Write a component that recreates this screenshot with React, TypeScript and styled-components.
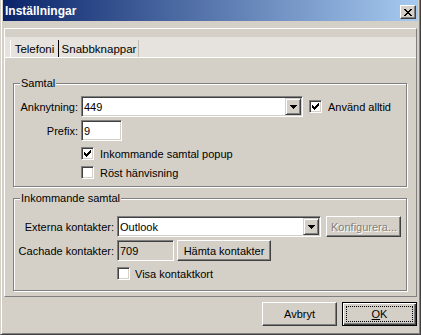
import React from 'react';
import styled, { createGlobalStyle } from 'styled-components';

const GlobalStyle = createGlobalStyle`
  html, body {
    margin: 0;
    padding: 0;
    background: #d4d0c8;
  }
  body {
    font-family: "Liberation Sans", Arial, sans-serif;
    font-size: 11px;
    color: #000;
  }
`;

const Window = styled.div`
  box-sizing: border-box;
  width: 421px;
  height: 335px;
  display: flex;
  flex-direction: column;
  background: #d4d0c8;
  border: 1px solid;
  border-top: none;
  border-color: #d4d0c8 #404040 #404040 #d4d0c8;
  box-shadow: inset 1px 0 #fff, inset -1px -1px #808080;
  padding: 0 2px 2px 2px;
`;

const TitleBar = styled.div`
  flex: none;
  height: 21px;
  display: flex;
  align-items: center;
  justify-content: space-between;
  padding: 0 2px;
  background: linear-gradient(to right, #0a246a, #a6caf0);
  color: #fff;
  font-weight: bold;
  font-size: 12px;
`;

const CloseButton = styled.div`
  box-sizing: border-box;
  width: 16px;
  height: 14px;
  margin-top: 3px;
  display: flex;
  align-items: center;
  justify-content: center;
  background: #d4d0c8;
  border: 1px solid;
  border-color: #fff #404040 #404040 #fff;
  box-shadow: inset -1px -1px #808080;
`;

const Panel = styled.div`
  box-sizing: border-box;
  flex: none;
  height: 269px;
  margin: 7px 1px 0;
  display: flex;
  flex-direction: column;
  border: 1px solid;
  border-color: #fff #808080 #808080 #fff;
`;

const TabBand = styled.div`
  flex: none;
  height: 8px;
`;

const TabStrip = styled.div`
  flex: none;
  height: 20px;
  display: flex;
  align-items: flex-end;
  padding-left: 5px;
  background: #e6e3de;
`;

const Tab = styled.div<{ $active?: boolean; $width: number }>`
  box-sizing: border-box;
  width: ${(p) => p.$width}px;
  height: 17px;
  display: flex;
  align-items: center;
  justify-content: center;
  border-left: 1px solid ${(p) => (p.$active ? '#fff' : 'transparent')};
  border-right: 1px solid ${(p) => (p.$active ? '#000' : '#c0bcb4')};
  font-size: 11.5px;
  white-space: nowrap;
`;

const Page = styled.div`
  flex: 1;
  display: flex;
  flex-direction: column;
  border-top: 1px solid #fff;
  padding: 0 9px 0 8px;
`;

const GroupBox = styled.div<{ $top: number; $padTop: number; $padBottom: number }>`
  position: relative;
  margin-top: ${(p) => p.$top}px;
  padding: ${(p) => p.$padTop}px 0 ${(p) => p.$padBottom}px;
  display: flex;
  flex-direction: column;
  border: 1px solid #808080;
  box-shadow: 1px 1px 0 #fff, inset 1px 1px 0 #fff;
`;

const Legend = styled.span`
  position: absolute;
  top: -7px;
  left: 6px;
  padding: 0 1px;
  line-height: 13px;
  background: #d4d0c8;
`;

const Row = styled.div<{ $gap?: number; $indent?: number }>`
  display: flex;
  align-items: center;
  margin-top: ${(p) => p.$gap || 0}px;
  padding-left: ${(p) => p.$indent || 0}px;
`;

const Label = styled.label<{ $width: number }>`
  flex: none;
  width: ${(p) => p.$width}px;
  margin-right: 3px;
  text-align: right;
  white-space: nowrap;
`;

const Sunken = styled.div<{ $width: number; $bg?: string }>`
  box-sizing: border-box;
  flex: none;
  width: ${(p) => p.$width}px;
  height: 21px;
  display: flex;
  align-items: center;
  background: ${(p) => p.$bg || '#fff'};
  border: 1px solid;
  border-color: #808080 #fff #fff #808080;
  box-shadow: inset 1px 1px #404040, inset -1px -1px #d4d0c8;
`;

const FieldText = styled.span`
  flex: 1;
  padding-left: 2px;
  white-space: nowrap;
`;

const DropButton = styled.div`
  box-sizing: border-box;
  width: 16px;
  height: 17px;
  margin: 1px;
  display: flex;
  align-items: center;
  justify-content: center;
  background: #d4d0c8;
  border: 1px solid;
  border-color: #d4d0c8 #404040 #404040 #d4d0c8;
  box-shadow: inset 1px 1px #fff, inset -1px -1px #808080;
`;

const CheckBox = styled.span`
  box-sizing: border-box;
  flex: none;
  width: 13px;
  height: 13px;
  display: flex;
  align-items: center;
  justify-content: center;
  background: #fff;
  border: 1px solid;
  border-color: #808080 #fff #fff #808080;
  box-shadow: inset 1px 1px #404040, inset -1px -1px #d4d0c8;
`;

const CheckText = styled.span<{ $gap?: number }>`
  margin-left: ${(p) => p.$gap ?? 6}px;
  white-space: nowrap;
`;

const Button = styled.button<{ $width: number; $height: number; $disabled?: boolean; $default?: boolean }>`
  box-sizing: border-box;
  flex: none;
  width: ${(p) => p.$width}px;
  height: ${(p) => p.$height}px;
  margin: 0;
  padding: 3px;
  display: flex;
  align-items: stretch;
  font-family: inherit;
  font-size: 11px;
  background: #d4d0c8;
  color: ${(p) => (p.$disabled ? '#808080' : '#000')};
  text-shadow: ${(p) => (p.$disabled ? '1px 1px 0 #fff' : 'none')};
  border: 1px solid;
  border-color: ${(p) => (p.$default ? '#000' : '#fff #404040 #404040 #fff')};
  box-shadow: ${(p) =>
    p.$default
      ? 'inset 1px 1px #fff, inset -1px -1px #404040, inset -2px -2px #808080'
      : 'inset -1px -1px #808080'};
`;

const ButtonFace = styled.span<{ $focus?: boolean }>`
  flex: 1;
  display: flex;
  align-items: center;
  justify-content: center;
  border: 1px dotted ${(p) => (p.$focus ? '#000' : 'transparent')};
  white-space: nowrap;
`;

const ButtonRow = styled.div`
  flex: none;
  display: flex;
  justify-content: flex-end;
  gap: 5px;
  margin-top: 5px;
  padding-right: 1px;
`;

const CloseGlyph = () => (
  <svg width="8" height="7" viewBox="0 0 8 7" shapeRendering="crispEdges">
    <path d="M0 0h2v1h-2zM6 0h2v1h-2zM1 1h2v1h-2zM5 1h2v1h-2zM2 2h4v1h-4zM3 3h2v1h-2zM2 4h4v1h-4zM1 5h2v1h-2zM5 5h2v1h-2zM0 6h2v1h-2zM6 6h2v1h-2z" fill="#000" />
  </svg>
);

const DownArrow = () => (
  <svg width="7" height="4" viewBox="0 0 7 4" shapeRendering="crispEdges">
    <path d="M0 0h7v1h-7zM1 1h5v1h-5zM2 2h3v1h-3zM3 3h1v1h-1z" fill="#000" />
  </svg>
);

const CheckMark = () => (
  <svg width="7" height="7" viewBox="0 0 7 7" shapeRendering="crispEdges">
    <path d="M6 0h1v3h-1zM5 1h1v3h-1zM4 2h1v3h-1zM3 3h1v3h-1zM2 4h1v3h-1zM1 3h1v3h-1zM0 2h1v3h-1z" fill="#000" />
  </svg>
);

const Check = ({ checked, label, gap }: { checked?: boolean; label: string; gap?: number }) => (
  <>
    <CheckBox>{checked && <CheckMark />}</CheckBox>
    <CheckText $gap={gap}>{label}</CheckText>
  </>
);

const Combo = ({ width, value }: { width: number; value: string }) => (
  <Sunken $width={width}>
    <FieldText>{value}</FieldText>
    <DropButton>
      <DownArrow />
    </DropButton>
  </Sunken>
);

const App = () => {
  return (
    <>
      <GlobalStyle />
      <Window>
        <TitleBar>
          <span>Inställningar</span>
          <CloseButton>
            <CloseGlyph />
          </CloseButton>
        </TitleBar>

        <Panel>
          <TabBand />
          <TabStrip>
            <Tab $active $width={49}>Telefoni</Tab>
            <Tab $width={80}>Snabbknappar</Tab>
          </TabStrip>

          <Page>
            <GroupBox $top={25} $padTop={12} $padBottom={7}>
              <Legend>Samtal</Legend>
              <Row>
                <Label $width={64}>Anknytning:</Label>
                <Combo width={222} value="449" />
                <Row $indent={6}>
                  <Check checked label="Använd alltid" />
                </Row>
              </Row>
              <Row $gap={3}>
                <Label $width={64}>Prefix:</Label>
                <Sunken $width={41}>
                  <FieldText>9</FieldText>
                </Sunken>
              </Row>
              <Row $gap={6} $indent={67}>
                <Check checked label="Inkommande samtal popup" />
              </Row>
              <Row $gap={6} $indent={67}>
                <Check label="Röst hänvisning" />
              </Row>
            </GroupBox>

            <GroupBox $top={11} $padTop={17} $padBottom={10}>
              <Legend>Inkommande samtal</Legend>
              <Row>
                <Label $width={100}>Externa kontakter:</Label>
                <Combo width={204} value="Outlook" />
                <Row $indent={5}>
                  <Button $width={75} $height={21} $disabled>
                    <ButtonFace>Konfigurera...</ButtonFace>
                  </Button>
                </Row>
              </Row>
              <Row $gap={3}>
                <Label $width={100}>Cachade kontakter:</Label>
                <Sunken $width={57} $bg="#d4d0c8">
                  <FieldText>709</FieldText>
                </Sunken>
                <Row $indent={3}>
                  <Button $width={94} $height={21}>
                    <ButtonFace>Hämta kontakter</ButtonFace>
                  </Button>
                </Row>
              </Row>
              <Row $gap={6} $indent={103}>
                <Check label="Visa kontaktkort" gap={5} />
              </Row>
            </GroupBox>
          </Page>
        </Panel>

        <ButtonRow>
          <Button $width={75} $height={24}>
            <ButtonFace>Avbryt</ButtonFace>
          </Button>
          <Button $width={75} $height={24} $default>
            <ButtonFace $focus>
              <span>
                <u>O</u>K
              </span>
            </ButtonFace>
          </Button>
        </ButtonRow>
      </Window>
    </>
  );
};

export default App;
